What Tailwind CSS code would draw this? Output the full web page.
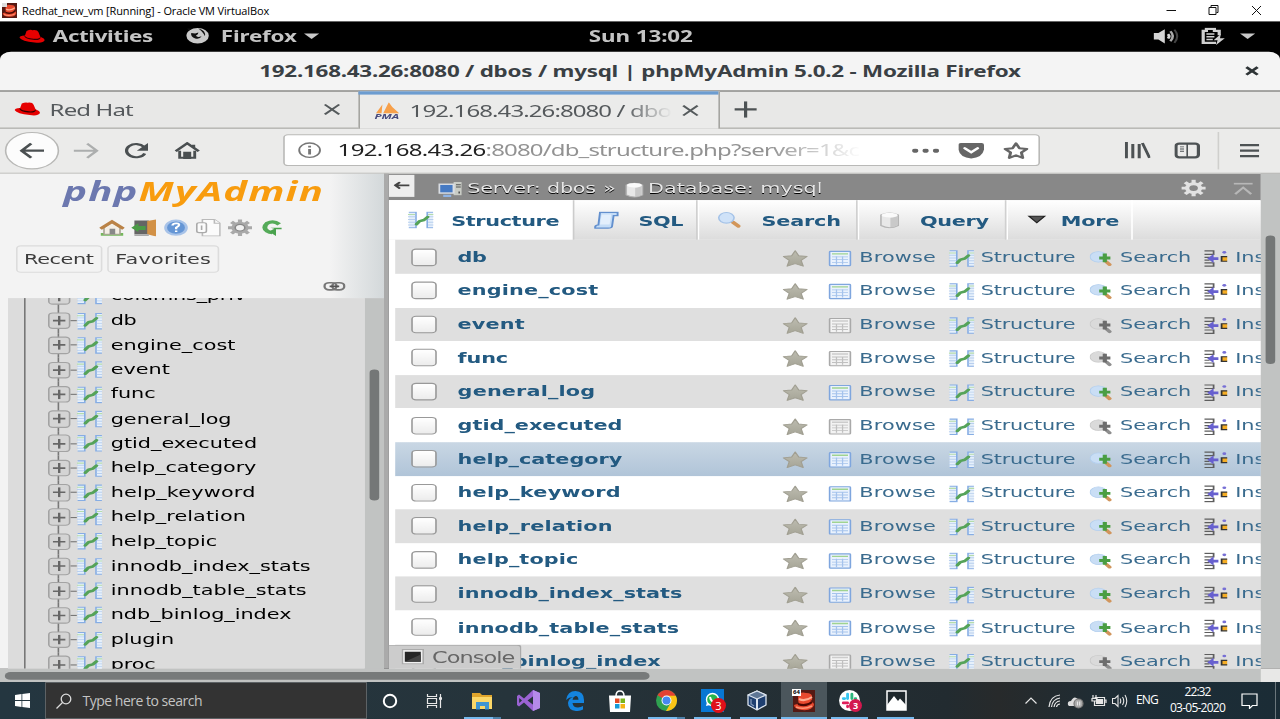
<!DOCTYPE html>
<html lang="en">
<head>
<meta charset="utf-8">
<title>Redhat_new_vm [Running] - Oracle VM VirtualBox</title>
<script src="https://cdn.jsdelivr.net/npm/@tailwindcss/browser@4"></script>
</head>
<body class="w-[1280px] h-[719px] overflow-hidden bg-white flex flex-col [&_svg]:shrink-0">
<!-- icon sprites -->
<svg class="absolute w-0 h-0">
  <defs>
    <linearGradient id="gs" x1="0" y1="0" x2="0" y2="1"><stop offset="0" stop-color="#bdbcb0"/><stop offset="1" stop-color="#a6a597"/></linearGradient>
  </defs>
  <symbol id="hat" viewBox="0 0 16 16"><path d="M4.600 3.200Q7 1.600 8.200 2.400Q11.400 1.800 12 4.200L13.200 8.300Q16 10 16 11.700Q14.800 14.800 9.600 13.600Q1.600 12.400 0.200 9.300Q-.1 7.400 3.600 7.200Z" fill="#e60000"/><path d="M3.400 7.200Q4.400 9.600 9 10.200Q12.800 10.600 13.200 8.400L13.400 9.300Q12.800 12 8.600 11.200Q3.800 10.400 3.200 8Z" fill="#300"/></symbol>
  <symbol id="struct" viewBox="0 0 16 16"><path d="M.5 1H5V15H.5M15.700 1H12V15H15.700" fill="#e6f0fb" stroke="#86ade4"/><path d="M0 5H4.500M0 7.500H4.500M0 10H4.500M0 12.500H4.500M12.500 5H16M12.500 7.500H16M12.500 10H16M12.500 12.500H16" stroke="#b9cfee" stroke-width=".8"/><path d="M0 3H4.500M12.500 3H16" stroke="#b5dcab"/><path d="M5.300 11.800L7.300 9L10 8L12.300 5.300" fill="none" stroke="#55a359" stroke-width="2.300" stroke-linecap="round" stroke-linejoin="round"/></symbol>
  <symbol id="star" viewBox="0 0 16 16"><path d="M8 .9L10.200 5.500L15.400 6.200L11.700 9.700L13 15L8 12.600L3 15L4.300 9.700L.6 6.200L5.800 5.500Z" fill="url(#gs)" stroke="#a19f92" stroke-width=".8" stroke-linejoin="round"/></symbol>
  <symbol id="browse" viewBox="0 0 16 16"><rect x="1.500" y="1.500" width="13" height="13" rx=".6" fill="#eaf2fd" stroke="#7fa6de"/><path d="M3 3.800H13" stroke="#9fd391" stroke-width="1.300"/><path d="M3 6.500H13M3 9H13M3 11.500H13M5.800 6V13.500M9.600 6V13.500" stroke="#a5c3ec" stroke-width=".8"/></symbol>
  <symbol id="browseg" viewBox="0 0 16 16"><rect x="1.500" y="1.500" width="13" height="13" rx=".6" fill="#f3f3f3" stroke="#a9a9a9"/><path d="M3 3.800H13" stroke="#ccc" stroke-width="1.300"/><path d="M3 6.500H13M3 9H13M3 11.500H13M5.800 6V13.500M9.600 6V13.500" stroke="#c0c0c0" stroke-width=".8"/></symbol>
  <symbol id="find" viewBox="0 0 16 16"><path d="M10.500 11L12.500 13.500" stroke="#d1955c" stroke-width="2.600" stroke-linecap="round"/><ellipse cx="5.500" cy="6.500" rx="5.200" ry="4.800" fill="#c9def5" stroke="#b3cfee" stroke-width=".7"/><path d="M9.500 3.500V11.500M6 7.500H13" stroke="#4a9e43" stroke-width="2.600"/></symbol>
  <symbol id="findg" viewBox="0 0 16 16"><path d="M10.500 11L12.500 13.500" stroke="#8e8e8e" stroke-width="2.600" stroke-linecap="round"/><ellipse cx="5.500" cy="6.500" rx="5.200" ry="4.800" fill="#dadada" stroke="#cbcbcb" stroke-width=".7"/><path d="M9.500 3.500V11.500M6 7.500H13" stroke="#6d6d6d" stroke-width="2.600"/></symbol>
  <symbol id="ins" viewBox="0 0 16 16"><path d="M.8 1H6.500V4.200H.8M.8 12H6.500V15H.8M.8 7H4M.8 9.500H4" fill="none" stroke="#5e5e5e" stroke-width="1.100"/><path d="M2.500 8L6.500 4V6.800H9.500V9.300H6.500V12Z" fill="#6760cf"/><path d="M15 6.300H11.500V10.500H15" fill="#f5ad25" stroke="#333" stroke-width="1.100"/><circle cx="13.200" cy="2.400" r="1.200" fill="#776fd5"/></symbol>
  <symbol id="gear" viewBox="0 0 16 16"><path d="M8 .5V15.500M.5 8H15.500M2.700 2.700L13.300 13.300M2.700 13.300L13.300 2.700" stroke="currentColor" stroke-width="2.600"/><circle cx="8" cy="8" r="5.400" fill="currentColor"/></symbol>
  <symbol id="db" viewBox="0 0 16 16"><path d="M2.600 3.500V13Q8 17 13.400 13V3.500Q8-.2 2.600 3.500Z" fill="#e8e8e8" stroke="#b5b5b5"/><path d="M8.500 6V14.800Q11.500 14.500 12.900 12.700V4.200Q11 6 8.500 6Z" fill="#c9c9c9"/><ellipse cx="8" cy="3.600" rx="5" ry="2.200" fill="#fafafa"/></symbol>
  <symbol id="vm" viewBox="0 0 22 22"><rect width="22" height="22" fill="#551913"/><path d="M5 8Q6 1 13 3Q20 3 19 8Q20 10 17 11Q21 12 21 15Q19 21 9 20Q1 19 1 15Q3 14 6 14Q5 11 5 8Z" fill="#e8492e"/><path d="M6 9Q12 12 19 7" stroke="#ffad91" stroke-width="2" fill="none"/><path d="M5 14Q13 17 19 12" stroke="#4a0904" stroke-width="2.200" fill="none"/><path d="M3 17Q11 20 19 16" stroke="#ff9577" stroke-width="1.500" fill="none"/></symbol>
</svg>

<!-- host window title bar -->
<header class="h-[22px] shrink-0 flex items-center bg-white border-b border-[#666] font-['Open_Sans',sans-serif] text-[11px] text-black">
  <svg class="w-[15px] h-[15px] ml-[2px] -mt-px"><use href="#vm" width="15" height="15"/><path d="M0 0H5V4H0Z" fill="#ddd"/></svg>
  <span data-w="247" class="ml-[5px] mt-px whitespace-nowrap">Redhat_new_vm [Running] - Oracle VM VirtualBox</span>
  <svg class="ml-auto w-[114px] h-[20px]" fill="none" stroke="#111"><path d="M0.500 9.500H10"/><path d="M43 6.500H50V13.500H43ZM45 6V4.500H52V11.500H50.500"/><path d="M86 5L95 14M95 5L86 14"/></svg>
</header>

<!-- guest display: 800x600 stretched to the window -->
<div class="w-[1280px] h-[660px] shrink-0 overflow-hidden bg-black">
<div id="guest" class="w-[800px] h-[600px] origin-top-left scale-x-160 scale-y-110 flex flex-col font-['Noto_Sans',sans-serif] overflow-hidden">

  <div class="h-[26.500px] shrink-0 flex items-center text-[14px] font-bold text-[#c4c4c4] leading-none pb-px">
    <svg class="ml-[12px] w-4 h-4 mt-px"><use href="#hat"/></svg>
    <span data-w="62.500" class="ml-[5px] w-[63px] whitespace-nowrap">Activities</span>
    <svg class="ml-[20px] w-[15px] h-[15px]" viewBox="0 0 15 15"><circle cx="7.500" cy="7.500" r="7" fill="#c9c9c9"/><path d="M3.500 5L6 5.500L8 4.500Q8 6.500 6.500 7.300Q7 9.500 10 8Q9 11 6 10Q3 8.500 3.500 5ZM8 1Q13 3 12 8Q11.500 5 8 1ZM1 1L2 3L4 1Z" fill="#111"/></svg>
    <span data-w="47.500" class="ml-[7px] w-[48px] whitespace-nowrap">Firefox</span>
    <svg class="ml-[4px] w-[10px] h-[6px]"><path d="M0 .5H9.500L4.750 5.500Z" fill="#c9c9c9"/></svg>
    <span data-w="65" class="ml-[168px] w-[65px] whitespace-nowrap">Sun 13:02</span>
    <svg class="ml-[287.500px] w-4 h-4" viewBox="0 0 16 16"><path d="M0 5H3L7 1.500V14.500L3 11H0Z" fill="#d5d5d5"/><path d="M9 6Q10.500 8 9 10" stroke="#d5d5d5" stroke-width="1.800" fill="none"/><path d="M10.500 3.500Q13.500 8 10.500 12.500" stroke="#aaa" stroke-width="1.600" fill="none"/><path d="M13 2Q16.500 8 13 14" stroke="#444" stroke-width="1.300" fill="none"/></svg>
    <svg class="ml-[13px] w-4 h-4" viewBox="0 0 16 16"><path d="M10 14H2V3H4V1.200H9V3H12V7" fill="none" stroke="#d0d0d0" stroke-width="2"/><path d="M4 6H9M4 8.500H9M4 11H8" stroke="#d0d0d0" stroke-width="1.400"/><path d="M13 6L8.500 11.500H11L10 16L15.500 9.700H12.500Z" fill="#d0d0d0"/></svg>
    <svg class="ml-[9px] w-[10px] h-[6px]"><path d="M0 .5H9.500L4.750 5.500Z" fill="#c9c9c9"/></svg>
  </div>

  <div class="h-[36.500px] shrink-0 rounded-t-[7px] bg-[#f4f4f4] border-b border-[#9c9c98] relative flex items-center justify-center text-[14px] font-bold text-[#3a4044]">
    <span data-w="476" class="w-[476px] whitespace-nowrap">192.168.43.26:8080 / dbos / mysql | phpMyAdmin 5.0.2 - Mozilla Firefox</span>
    <svg class="absolute right-[13.500px] top-[13px] w-[9px] h-[9px]"><path d="M1 1L8 8M8 1L1 8" stroke="#2e3436" stroke-width="2"/></svg>
  </div>

  <!-- tab strip -->
  <div class="h-[33.500px] shrink-0 flex bg-[#e8e8e7] text-[15px] text-[#55595c]">
    <div class="w-[224px] flex items-center border-b border-[#a5a5a1]">
      <svg class="ml-[9px] w-4 h-4"><use href="#hat"/></svg>
      <span data-w="52" class="ml-[6px] w-[52px] whitespace-nowrap">Red Hat</span>
      <svg class="ml-[118.500px] mt-px w-[11px] h-[11px]"><path d="M1 1L10 10M10 1L1 10" stroke="#555a5c" stroke-width="1.600"/></svg>
    </div>
    <div class="w-[225.500px] flex items-center border-x border-[#a5a5a1] bg-[#ebebea] relative">
      <div class="absolute -left-px right-0 top-0 h-[3px] bg-[#6c9cd0]"></div>
      <svg class="ml-[9px] w-4 h-4 mt-[2px]" viewBox="0 0 16 16"><path d="M1 10L5 2L4.500 10ZM5.500 10L9 0L14 10ZM11 4L15.500 10H11Z" fill="#f7a04a"/><text x="0" y="15.500" font-size="6.500" font-weight="bold" font-style="italic" textLength="15.500" lengthAdjust="spacingAndGlyphs" fill="#474a7d">PMA</text></svg>
      <span class="ml-[6px] w-[164px] overflow-hidden whitespace-nowrap [mask-image:linear-gradient(to_right,#000_82%,transparent)]"><span data-w="163.500">192.168.43.26:8080 / dbo</span></span>
      <svg class="ml-[6px] mt-px w-[11px] h-[11px]"><path d="M1 1L10 10M10 1L1 10" stroke="#555a5c" stroke-width="1.600"/></svg>
    </div>
    <div class="flex-1 flex items-center border-b border-[#a5a5a1]">
      <svg class="ml-[9.500px] w-[14px] h-[15px]"><path d="M7 0V15M0 7.500H14" stroke="#4d5254" stroke-width="2"/></svg>
    </div>
  </div>

  <!-- navigation toolbar -->
  <div class="h-[41px] shrink-0 flex items-center bg-[#ebebea] border-b border-[#bcbcba]">
    <div class="ml-[3px] size-[34px] rounded-full bg-[#fcfcfc] border border-[#b8b8b6] flex items-center justify-center">
      <svg class="w-4 h-4" fill="none" stroke="#4a4f51" stroke-width="2"><path d="M15.500 8H1.500M7.500 1.500L1.500 8L7.500 14.500"/></svg>
    </div>
    <svg class="ml-[8.500px] w-4 h-4" fill="none" stroke="#acaeae" stroke-width="1.800"><path d="M0 8H14.500M8.500 1.500L14.500 8L8.500 14.500"/></svg>
    <svg class="ml-[15.500px] w-4 h-4" fill="none" stroke="#4a4f51" stroke-width="2"><path d="M13 4.500A6 6 0 1 0 13.500 10.500"/><path d="M15.500 1V8H8.500L15.500 1Z" fill="#4a4f51" stroke="none"/></svg>
    <svg class="ml-[15.500px] w-4 h-4" fill="none" stroke="#4a4f51"><path d="M.8 8.500L8 1.300L15.200 8.500" stroke-width="2"/><path d="M3.300 8V14.500H12.700V8" stroke-width="1.800"/><path d="M6 15V9.500H10V15Z" fill="#4a4f51"/><path d="M12 2.500V5" stroke-width="2"/></svg>
    <div class="ml-[52px] w-[473px] h-[29.500px] rounded-[3px] border border-[#b9b9b7] bg-white flex items-center text-[15px]">
      <svg class="ml-[8.500px] w-[15px] h-[15px]" fill="none" stroke="#777"><circle cx="7.500" cy="7.500" r="6.500" stroke-width="1.200"/><path d="M7.500 6.500V11.500M7.500 3.500V5.200" stroke-width="1.800"/></svg>
      <div class="ml-[10px] w-[328px] overflow-hidden whitespace-nowrap [mask-image:linear-gradient(to_right,#000_82%,transparent)]"><span data-w="92.500" class="text-[#222]">192.168.43.26</span><span data-w="233.500" class="text-[#929292]">:8080/db_structure.php?server=1&amp;c</span></div>
      <svg class="ml-[31px] w-[17px] h-1" fill="#666"><circle cx="2" cy="2" r="1.900"/><circle cx="8.500" cy="2" r="1.900"/><circle cx="15" cy="2" r="1.900"/></svg>
      <svg class="ml-[12px] w-4 h-4"><path d="M0 2.500Q0 1 1.500 1H14.500Q16 1 16 2.500V7Q15 14.500 8 15Q1 14.500 0 7Z" fill="#666"/><path d="M4 5.800L8 9.500L12 5.800" fill="none" stroke="#fff" stroke-width="2" stroke-linecap="round"/></svg>
      <svg class="ml-[12px] w-4 h-4"><path d="M8 1.300L10.100 5.700L14.800 6.400L11.400 9.700L12.200 14.500L8 12.200L3.800 14.500L4.600 9.700L1.200 6.400L5.900 5.700Z" fill="none" stroke="#666" stroke-width="1.900" stroke-linejoin="round"/></svg>
    </div>
    <svg class="ml-[53px] w-[16px] h-[15px]" stroke="#4d5254" stroke-width="1.900"><path d="M1 0V15M5 2V15M9 2V15M11 1L15.500 14.500"/></svg>
    <svg class="ml-[15.500px] w-4 h-4" fill="none" stroke="#4d5254"><rect x="1" y="1.500" width="14" height="12.500" rx="2" stroke-width="2"/><path d="M8 2V14"/><path d="M3.500 4.500H6M3.500 6.500H6M3.500 8.500H6" stroke-width=".8"/></svg>
    <div class="ml-[11px] w-px h-[34px] bg-[#cfcfcd]"></div>
    <svg class="ml-[13px] w-[12px] h-[14px]" stroke="#4d5254" stroke-width="2"><path d="M0 2H12M0 7H12M0 12H12"/></svg>
  </div>

  <!-- page -->
  <div class="h-[450.500px] shrink-0 flex font-['DejaVu_Sans',sans-serif]">
    <!-- phpMyAdmin navigation panel -->
    <div class="w-[240px] shrink-0 bg-[#f3f3f3] flex flex-col">
      <div class="h-[113px] shrink-0 bg-[linear-gradient(to_right,#f3f3f3_86%,#d3d8da)]">
        <div class="h-[41px] pt-[0.500px] pl-[39.500px] font-['Open_Sans',sans-serif] text-[25px] leading-[30px] font-bold italic whitespace-nowrap"><span data-w="163" class="text-[#f89c0e]"><span class="text-[#6c78af]">php</span>MyAdmin</span></div>
        <div class="flex pl-[62px] gap-[4px]">
          <svg class="w-4 h-4"><path d="M1 14H15" stroke="#75b75c" stroke-width="2.500"/><path d="M3 8L8 3L13 8V14H3Z" fill="#f3eee5" stroke="#a8a294"/><path d="M.8 9L8 2.500L15.200 9" fill="none" stroke="#ba8246" stroke-width="2.500"/><path d="M6.500 9H10V14H6.500Z" fill="#888"/></svg>
          <svg class="w-4 h-4"><path d="M2 1.500H11V14H2Z" fill="#656565"/><path d="M10 2L15.500 .5V16L10 14Z" fill="#d29146"/><path d="M2 14H11V15.500H2Z" fill="#aaa"/><path d="M0 8L4.500 4V6.500H9V10H4.500V12Z" fill="#4b9b47"/></svg>
          <svg class="w-4 h-4"><circle cx="8" cy="8" r="6.500" fill="#6596d5" stroke="#a8c3e8" stroke-width="1.800"/><path d="M5.800 6Q6 4 8.100 4Q10.800 4.200 9.500 6.500L8.100 8V9.300M8.100 10.500V12" fill="none" stroke="#fff" stroke-width="1.500"/></svg>
          <svg class="w-4 h-4" fill="#fbfbfb" stroke="#bababa"><path d="M4.500 .5H12L15.500 4V15.500H4.500Z"/><path d="M12 .5V4H15.500"/><rect x="1" y="3.500" width="6" height="9" rx="1.500" stroke="#aaa"/><path d="M4 6V10" stroke="#aaa"/></svg>
          <svg class="w-4 h-4 text-[#a9a9a9]"><use href="#gear"/><circle cx="8" cy="8" r="3" fill="#f1f1f1" stroke="#888"/></svg>
          <svg class="w-4 h-4" fill="none"><path d="M12.500 5Q9 1 5 4Q2 8 5 11Q6.500 12.500 8 12.500" stroke="#55ab59" stroke-width="3"/><path d="M7 8H14V9.500L10.500 9.500V15.500L6 11.500L9.500 9Z" fill="#49a24d"/></svg>
        </div>
        <div class="flex pl-[10px] gap-[3px] mt-[8.500px] text-[13px] text-[#3c3c3c]">
          <div class="w-[54px] h-[25px] flex items-center pl-[4px] rounded-[3px] border border-[#dcdcdc]"><span data-w="43.500">Recent</span></div>
          <div class="w-[70px] h-[25px] flex items-center pl-[4px] rounded-[3px] border border-[#dcdcdc]"><span data-w="60">Favorites</span></div>
        </div>
        <svg class="ml-[202px] mt-[7.500px] w-[14px] h-[9px]" fill="none" stroke="#777"><rect x=".8" y="1" width="7.500" height="6.500" rx="3" stroke-width="1.500"/><rect x="5.700" y="1" width="7.500" height="6.500" rx="3" stroke-width="1.500"/><path d="M4 4.300H10" stroke="#555" stroke-width="1.500"/></svg>
      </div>
      <div class="flex-1 min-h-0 ml-[5px] flex">
        <div class="w-[223px] bg-[#dcdcdc] overflow-hidden flex">
          <div class="ml-[9.500px] w-px bg-[#777]"></div>
          <div id="tree" class="ml-[14.200px] -mt-[12.300px] text-[13px] text-black"></div>
        </div>
        <div class="w-[12px] bg-[#c1c3c2] pt-[65px] pl-[2.500px]"><div class="w-[6.500px] h-[119px] rounded-full bg-[#747777]"></div></div>
      </div>
    </div>
    <div class="w-[3px] shrink-0 bg-[#aaa]"></div>

    <!-- main panel -->
    <div class="w-[545px] shrink-0 relative overflow-hidden bg-white flex flex-col">
      <div class="h-[24.800px] shrink-0 bg-[#888] flex items-start text-[13px] leading-[26px] text-[#e6e6e6] whitespace-nowrap [text-shadow:0_1px_0_#000]">
        <div class="w-[16px] h-[20px] mt-px shrink-0 bg-[#eee] flex items-center justify-center"><svg class="w-[10px] h-[7px]" fill="none" stroke="#444" stroke-width="1.500"><path d="M10 3.500H1M4 .5L1 3.500L4 6.500"/></svg></div>
        <svg class="ml-[15px] mt-[6px] w-4 h-4"><path d="M9 1H15V14H9Z" fill="#c9ccc5" stroke="#888"/><path d="M11 4H14M11 6H14M13 10V12" stroke="#555"/><rect x=".5" y="3.500" width="9" height="8" fill="#467ac3" stroke="#d9dde3" stroke-width="1.300"/><path d="M3 14H8" stroke="#8fb5e8" stroke-width="2"/></svg>
        <span data-w="80.500" class="ml-[2px] w-[81px] shrink-0">Server: dbos</span>
        <span class="ml-[4px] w-[9px] shrink-0">»</span>
        <svg class="ml-[2.500px] mt-[7px] w-[15px] h-[15px]"><use href="#db" width="15" height="15"/></svg>
        <span data-w="109" class="ml-[1.500px] w-[109px] shrink-0">Database: mysql</span>
        <svg class="ml-auto mt-[5.500px] w-4 h-4 text-[#e2e2e2]"><use href="#gear"/><circle cx="8" cy="8" r="2.700" fill="#888"/></svg>
        <svg class="ml-[17px] mr-[5.500px] mt-[8px] w-[12px] h-[12px]" fill="none" stroke="#b7b7b7" stroke-width="1.600"><path d="M0 1H12M1 10.500L6 4.500L11 10.500"/></svg>
      </div>
      <div class="h-[36px] shrink-0 flex text-[13px] font-bold text-[#235a81] bg-gradient-to-b from-white to-[#dcdcdc] whitespace-nowrap [&>div]:flex [&>div]:items-center [&>div]:shrink-0">
        <div class="w-[115px] bg-white pl-[11.500px]"><svg class="w-4 h-4"><use href="#struct"/></svg><span data-w="67.500" class="ml-[11.500px]">Structure</span></div>
        <div class="w-[77px] pl-[11.500px] border-l border-[#ccc]"><svg class="w-4 h-4"><path d="M4 1H15V4H12.500L11.500 14Q11 15.500 9 15.500H1Q.5 13 3 12.500Z" fill="#c5ddf7" stroke="#6390ce" stroke-width="1.200"/><path d="M5 3H11L10 12H4Z" fill="#e3effc"/></svg><span data-w="28" class="ml-[12.500px]">SQL</span></div>
        <div class="w-[100px] pl-[12px] border-l border-[#d0d0d0] shadow-[inset_1px_0_0_#fff]"><svg class="w-4 h-4"><path d="M10 10L13.500 13.500" stroke="#d2965a" stroke-width="2.800" stroke-linecap="round"/><circle cx="6" cy="6" r="4.800" fill="#cfe2f8" stroke="#a5c3e8"/></svg><span data-w="49.500" class="ml-[12px]">Search</span></div>
        <div class="w-[93px] pl-[12px] border-l border-[#d0d0d0] shadow-[inset_1px_0_0_#fff]"><svg class="w-4 h-4"><use href="#db"/></svg><span data-w="43" class="ml-[11px]">Query</span></div>
        <div class="w-[80px] pl-[13px] border-l border-r border-l-[#d0d0d0] border-r-white shadow-[inset_1px_0_0_#fff]"><svg class="w-[12px] h-[8px]"><path d="M1 .5H11L6 6.500Z" fill="#555" stroke="#222"/></svg><span data-w="36.500" class="ml-[9px]">More</span></div>
      </div>
      <div id="rows" class="ml-[4px] w-[541px] shrink-0 text-[13px]"></div>
      <div class="absolute left-0 bottom-0 w-[83px] h-[22.500px] bg-[#ccc] border-t border-r border-[#aaa] rounded-tr-[3px] flex items-center text-[14px] text-[#666]">
        <svg class="ml-[8px] w-[14px] h-[14px]"><rect x=".5" y=".5" width="13" height="13" fill="#f0f0f0" stroke="#aaa"/><path d="M2 2.500H12V11.500H2Z" fill="#252525"/><path d="M2 11.500L12 5V11.500Z" fill="#444"/></svg>
        <span data-w="51.500" class="ml-[5px] mt-[2px]">Console</span>
      </div>
    </div>
    <div class="w-[12px] shrink-0 bg-[#c1c3c2] pt-[56px] pl-[2.500px]"><div class="w-[6.500px] h-[117px] rounded-full bg-[#747777]"></div></div>
  </div>

  <div class="flex-1 flex bg-[#c1c3c2]">
    <div class="flex-1 pl-[3px] pt-[3px]"><div class="w-[403px] h-[6.500px] rounded-full bg-[#777a7a]"></div></div>
    <div class="w-[12px] bg-[#e8e8e7]"></div>
  </div>
</div>
</div>

<!-- Windows taskbar -->
<footer class="h-[37px] shrink-0 flex bg-[linear-gradient(to_right,#243640,#26343b_40%,#222b30_74%,#272a2b_78%,#1d2d36_88%,#1b2c36)] font-['Open_Sans',sans-serif] text-white">
  <div class="w-[45px] flex items-center pl-[15px]"><svg class="w-[15px] h-[15px]" fill="#fff"><path d="M0 2L6.500 1V7H0ZM7.300 .9L15 0V7H7.300ZM0 7.900H6.500V14L0 13ZM7.300 7.900H15V15L7.300 14Z"/></svg></div>
  <div class="w-[322px] flex items-center bg-[#333] border border-[#5d6265] text-[14px] text-[#c4c4c4]">
    <svg class="ml-[10px] w-[16px] h-[16px]" fill="none" stroke="#ddd" stroke-width="1.300"><circle cx="10" cy="6" r="4.800"/><path d="M6.500 9.500L.5 15.500"/></svg>
    <span data-w="119.500" class="ml-[10.500px] whitespace-nowrap">Type here to search</span>
  </div>
  <div class="flex [&>div]:w-[46px] [&>div]:h-[37px] [&>div]:flex [&>div]:items-center [&>div]:justify-center [&>div]:relative">
    <div><svg class="w-4 h-4"><circle cx="8" cy="8" r="6.200" fill="none" stroke="#fff" stroke-width="2"/></svg></div>
    <div><svg class="w-[17px] h-4 -ml-[3px]" fill="none" stroke="#e8e8e8" stroke-width="1.200"><path d="M1.500 1V3.500H10.500V1M1.500 15V12.500H10.500V15M1.500 5.500H10.500V10.500H1.500ZM14.500 1V15"/><path d="M13 5.500H16" stroke-width="2.500"/></svg></div>
    <div><svg class="w-[21px] h-[18px]"><path d="M0 1H8L10 3H20V17H0Z" fill="#e0a52c"/><path d="M0 5H20V17H0Z" fill="#fbd768"/><path d="M4 10H17V17.500H13V14H8V17.500H4Z" fill="#3f95d2"/></svg><i class="absolute left-[5px] bottom-0 w-[37px] h-[2px] bg-[#76b9ed] after:absolute after:left-[29px] after:w-[8px] after:h-[2px] after:bg-[#4d80a8]"></i></div>
    <div><svg class="w-[23px] h-[21px]"><path d="M16 0L23 3V18L16 21L7 12.500L2 16.500L0 15V6L2 4.500L7 8.500ZM16.500 6L10.500 10.500L16.500 15ZM2.200 8V13L5 10.500Z" fill="#9b63d3" fill-rule="evenodd"/><path d="M16 0L23 3V18L16 21Z" fill="#b58aea"/></svg></div>
    <div><svg class="w-[20px] h-[20px] ml-[2px]" viewBox="0 0 20 20"><path d="M1 9Q2.500 0 10.500 0Q19 .5 19 9V12H7.500Q8 16.500 13 16.500Q16 16.400 18 15V18.500Q15 20.200 11 20Q3 19 3 12Q3.500 7.500 8 6Q4 6 1 9ZM7.500 8.700H13.500Q13 4.500 10.500 5Q8 5.500 7.500 8.700Z" fill="#1484df" fill-rule="evenodd"/></svg></div>
    <div><svg class="w-[22px] h-[22px]"><path d="M7 6Q7 1 11 1Q15 1 15 6" fill="none" stroke="#fff" stroke-width="1.500"/><path d="M0 5.500H22L21 22H1Z" fill="#fff"/><path d="M6 8.500H10.500V13H6Z" fill="#e64b25"/><path d="M11.500 8.500H16V13H11.500Z" fill="#79b51c"/><path d="M6 14H10.500V18.500H6Z" fill="#169bd9"/><path d="M11.500 14H16V18.500H11.500Z" fill="#f4b415"/></svg></div>
    <div><svg class="w-[21px] h-[21px]" viewBox="0 0 22 22"><circle cx="11" cy="11" r="11" fill="#2fa150"/><path d="M11 11L1.500 5.500A11 11 0 0 1 20.500 5.500Z" fill="#e34133"/><path d="M11 6H20.800A11 11 0 0 1 10.500 22L15.300 13.500Z" fill="#fbc417"/><circle cx="11" cy="11" r="5.200" fill="#fff"/><circle cx="11" cy="11" r="4.200" fill="#4688f1"/></svg><i class="absolute left-[5px] bottom-0 w-[37px] h-[2px] bg-[#76b9ed] after:absolute after:left-[29px] after:w-[8px] after:h-[2px] after:bg-[#4d80a8]"></i></div>
    <div><svg class="w-[23px] h-[23px]"><path d="M0 0H23V23H0Z" fill="#0877d3"/><circle cx="11.500" cy="10.500" r="6" fill="#28b64c" stroke="#fff" stroke-width="1.400"/><path d="M5 17L6 13L9 16Z" fill="#fff"/><path d="M9 8Q10 13 14 13" stroke="#fff" stroke-width="2" fill="none"/></svg><b class="absolute left-[22px] top-[16px] size-[15px] rounded-full bg-[#e01019] text-[11px] leading-[15px] font-normal text-center">3</b><i class="absolute left-[5px] bottom-0 w-[37px] h-[2px] bg-[#76b9ed]"></i></div>
    <div><svg class="w-[20px] h-[21px] -ml-[3px]" stroke="#dbe4ef" stroke-width="1.300" stroke-linejoin="round"><path d="M10 1L19 5V15L10 20L1 15V5Z" fill="#1e3f70"/><path d="M10 1L19 5L10 9L1 5Z" fill="#5e7695"/><path d="M10 9V20" stroke-width="2"/><path d="M4 9V14L7 16" stroke="#8299b8" fill="none"/></svg><i class="absolute left-[5px] bottom-0 w-[37px] h-[2px] bg-[#76b9ed]"></i></div>
    <div><span class="absolute left-0 top-0 w-[46px] h-[37px] bg-[#4b565c]"></span><svg class="w-[22px] h-[22px] relative"><use href="#vm"/></svg><b class="absolute left-[11px] top-[7px] w-[9px] h-[7px] bg-white text-black text-[6px] leading-[7px] text-center">64</b><i class="absolute left-0 bottom-0 w-[46px] h-[2px] bg-[#76b9ed]"></i></div>
    <div><svg class="w-[21px] h-[21px] -ml-[2px]" viewBox="0 0 22 22" stroke-width="3" stroke-linecap="round"><circle cx="11" cy="11" r="11" fill="#fff" stroke="none"/><path d="M9 4.500V9M4.500 9H6" stroke="#36c5f0"/><path d="M13.500 4.500V9M17 9H17.500" stroke="#2eb67d"/><path d="M4.500 13.500H9M9 17V17.500" stroke="#e01e5a"/><path d="M13.500 13.500H17" stroke="#ecb22e"/></svg><b class="absolute left-[22px] top-[17px] size-[13px] rounded-full bg-[#d3184e] text-[9px] leading-[13px] text-center">3</b><i class="absolute left-[4px] bottom-0 w-[37px] h-[2px] bg-[#76b9ed]"></i></div>
    <div><svg class="w-[21px] h-[21px]"><path d="M1 1H20V20H1Z" fill="#1e272c" stroke="#fff" stroke-width="1.500"/><path d="M1 15L8 6L12 11L14 8.500L20 15V20H1Z" fill="#fff"/></svg><i class="absolute left-[4px] bottom-0 w-[37px] h-[2px] bg-[#76b9ed]"></i></div>
  </div>
  <div class="ml-auto flex items-center text-[12px] leading-[16px] whitespace-nowrap">
    <svg class="w-[85px] h-[18px]" fill="none" stroke="#e6e6e6" stroke-width="1.200"><path d="M.5 11.500L6 6L11.500 11.500"/><path d="M24 15Q25 4 35 3M26.500 15Q27.500 7 35 6M29 15Q30 9.500 35 9M31.500 15Q32 12 35 12"/><path d="M43 13Q42 9 46 9Q49 3 53 7Q57 8 55 14H44Z" fill="#ddd" stroke="none"/><circle cx="53.500" cy="11.500" r="4.500" fill="#a9a9a9" stroke="#777"/><path d="M52.500 9.500V13.500M54.700 9.500V13.500"/><path d="M69.500 5.500H79.500V13.500H69.500M79.500 8H81V11"/><path d="M71.500 7.500H77.500V11.500H71.500Z" fill="#e6e6e6"/><path d="M68 3V7M71 3V7M67 6.500H72V9H67ZM69.500 9V14"/></svg>
    <svg class="w-[16px] h-[16px] ml-[2px] mr-[8px]" fill="none" stroke="#e6e6e6" stroke-width="1.100"><path d="M.5 5.500H3L6 2.500V13.500L3 10.500H.5ZM8 5.500Q9.500 8 8 10.500M10.500 4Q13 8 10.500 12M13 2Q16.500 8 13 14"/></svg>
    <span data-w="22" class="w-[22px] -mt-px">ENG</span>
    <div class="w-[56px] ml-[11.500px] -mt-px flex flex-col items-center"><span data-w="26" class="w-[26px]">22:32</span><span data-w="55" class="w-[55px]">03-05-2020</span></div>
    <svg class="ml-[15.500px] mr-[17px] w-[17px] h-[17px]" fill="none" stroke="#fff" stroke-width="1.200"><path d="M1 2H16V13.500H11.500L8.500 16.500V13.500H1Z"/></svg>
    <div class="w-[5px] h-[37px] border-l border-[#6b767c]"></div>
  </div>
</footer>

<script>
const tree = [['columns_priv',84.5],['db',16],['engine_cost',78],['event',37],['func',28],['general_log',75.5],['gtid_executed',91.5],['help_category',91],['help_keyword',90.5],['help_relation',84.5],['help_topic',66.5],['innodb_index_stats',125],['innodb_table_stats',122.5],['ndb_binlog_index',113],['plugin',39.5],['proc',28]];
document.getElementById('tree').innerHTML = tree.map(([t, w]) => `
<div class="h-[22.320px] flex items-center relative whitespace-nowrap">
  <div class="absolute left-[6.500px] top-0 w-px h-full bg-[#777]"></div>
  <div class="relative w-[14px] h-[15.500px] rounded-[3px] border border-[#a3a3a3] bg-[#d4d4d4] flex items-center justify-center"><svg class="w-[8px] h-[9px]"><path d="M4 0V9M0 4.500H8" stroke="#666" stroke-width="1.500"/></svg></div>
  <div class="w-[4px] h-px bg-[#777]"></div>
  <svg class="w-4 h-4"><use href="#struct"/></svg>
  <span data-w="${w}" class="ml-[5.500px] pb-px">${t}</span>
</div>`).join('');

const rows = [['db',18,0],['engine_cost',88,0],['event',42,1],['func',31.5,1],['general_log',86,0],['gtid_executed',103,1],['help_category',103,0],['help_keyword',102,0],['help_relation',97,0],['help_topic',75.5,0],['innodb_index_stats',140.5,0],['innodb_table_stats',138.5,0],['ndb_binlog_index',127,1]];
document.getElementById('rows').innerHTML = rows.map(([t, w, empty], i) => `
<div class="h-[30.620px] flex items-center whitespace-nowrap text-[#235a81] ${t === 'help_category' ? 'bg-gradient-to-b from-[#c9d7e4] to-[#b0c4d8]' : i % 2 ? 'bg-white' : 'bg-[#dfdfdf]'}">
  <div class="ml-[9.500px] w-[16.500px] h-[16px] shrink-0 rounded-[3px] border border-[#999] bg-gradient-to-b from-white to-[#ececec]"></div>
  <div class="ml-[13px] w-[202.500px] shrink-0 font-bold"><span data-w="${w}">${t}</span></div>
  <svg class="w-[16px] h-[16px] mt-[2px] shrink-0"><use href="#star"/></svg>
  <svg class="ml-[12.500px] w-4 h-4 mt-[2px] shrink-0"><use href="${empty ? '#browseg' : '#browse'}"/></svg>
  <span class="ml-[4px] w-[55.500px] shrink-0 text-[#3a6b8e]"><span data-w="48">Browse</span></span>
  <svg class="w-4 h-4 mt-[2px] shrink-0"><use href="#struct"/></svg>
  <span class="ml-[4.500px] w-[67.500px] shrink-0 text-[#3a6b8e]"><span data-w="59">Structure</span></span>
  <svg class="w-4 h-4 mt-[2px] shrink-0"><use href="${empty ? '#findg' : '#find'}"/></svg>
  <span class="ml-[3.500px] w-[52px] shrink-0 text-[#3a6b8e]"><span data-w="44.5">Search</span></span>
  <svg class="w-4 h-4 mt-[2px] shrink-0"><use href="#ins"/></svg>
  <span class="ml-[4px] text-[#3a6b8e]">Insert</span>
</div>`).join('');

// Track each label so that it fills its nominal width.
function track() {
  const guest = document.getElementById('guest');
  const zoom = guest.getBoundingClientRect().width / guest.offsetWidth;
  const labels = [...document.querySelectorAll('[data-w]')];
  labels.forEach(el => { el.style.letterSpacing = '0px'; });
  labels.forEach(el => {
    const r = document.createRange();
    r.selectNodeContents(el);
    const width = r.getBoundingClientRect().width / (guest.contains(el) ? zoom : 1);
    el.style.letterSpacing = ((+el.dataset.w - width) / el.textContent.length).toFixed(3) + 'px';
  });
}
window.addEventListener('load', () => { track(); document.fonts.ready.then(track); requestAnimationFrame(track); });
</script>
</body>
</html>
